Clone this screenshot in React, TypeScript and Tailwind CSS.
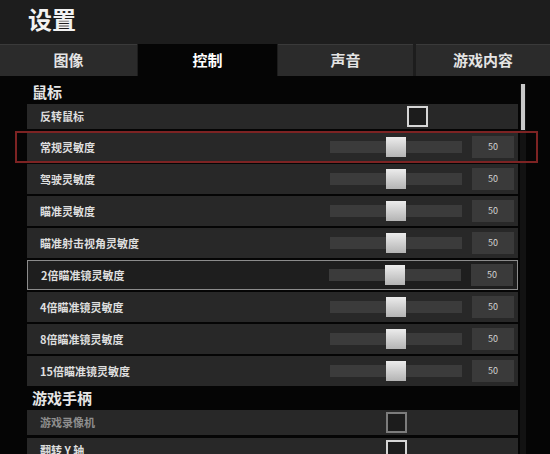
import React from "react"

const font = { fontFamily: '"Noto Sans CJK SC", "Noto Sans", sans-serif' }

const tabs = [
  { id: "image", label: "图像", w: "w-[137px] mr-[1px]" },
  { id: "control", label: "控制", w: "w-[139px] mr-[1px]" },
  { id: "sound", label: "声音", w: "w-[135px] mr-[3px]" },
  { id: "game", label: "游戏内容", w: "flex-1" },
]

const sliders = [
  { label: "常规灵敏度", selected: true },
  { label: "驾驶灵敏度" },
  { label: "瞄准灵敏度" },
  { label: "瞄准射击视角灵敏度" },
  { label: "2倍瞄准镜灵敏度", hover: true },
  { label: "4倍瞄准镜灵敏度" },
  { label: "8倍瞄准镜灵敏度" },
  { label: "15倍瞄准镜灵敏度" },
]

function SliderRow({ label, selected, hover }: { label: string; selected?: boolean; hover?: boolean }) {
  return (
    <div
      className={`relative shrink-0 h-[30px] flex items-center ${
        hover ? "border border-[#8c8c8c] bg-[#1e1e1e]" : "bg-[#282828]"
      }`}
    >
      {selected && (
        <div className="absolute -left-[12px] -right-[20px] -top-[1px] -bottom-[1px] border-2 border-[#7d2323] pointer-events-none" />
      )}
      <span className="flex-1 pl-[13px] text-[11px] font-bold text-[#dedede]">{label}</span>
      <div className="relative w-[132px] h-[12px] bg-[#3b3b3b] flex items-center justify-center">
        <div className="w-[20px] h-[20px] bg-gradient-to-b from-[#ececec] to-[#b4b4b4]" />
      </div>
      <div className="ml-[10px] mr-[4px] w-[42px] h-[22px] bg-[#3a3a3a] flex items-center justify-center text-[9px] text-[#d4d4d4]">
        50
      </div>
    </div>
  )
}

function CheckRow({
  label,
  spacer,
  dim,
}: {
  label: string
  spacer: string
  dim?: boolean
}) {
  return (
    <div className="shrink-0 h-[25px] flex items-center bg-[#282828]">
      <span className={`flex-1 pl-[13px] text-[11px] font-bold ${dim ? "text-[#8e8e8e]" : "text-[#dedede]"}`}>
        {label}
      </span>
      <div
        className={`w-[21px] h-[21px] border-2 bg-[#1c1c1c] ${dim ? "border-[#7c7c7c]" : "border-[#d6d6d6]"}`}
      />
      <div className={spacer} />
    </div>
  )
}

export default function App() {
  return (
    <div className="w-[550px] h-[454px] overflow-hidden bg-[#050505] flex flex-col" style={font}>
      {/* Header */}
      <div className="shrink-0 h-[44px] bg-[#1d1d1d] pl-[28px] pt-[2px]">
        <h1 className="text-[24px] leading-[34px] font-bold text-[#f2f2f2]">设置</h1>
      </div>

      {/* Tabs */}
      <div className="shrink-0 h-[32px] flex bg-[#1d1d1d]">
        {tabs.map((tab) => {
          const active = tab.id === "control"
          return (
            <div
              key={tab.id}
              className={`${tab.w} flex items-center justify-center text-[15px] font-bold ${
                active ? "bg-[#050505] text-white" : "bg-[#2b2b2b] text-[#e4e4e4] border-t border-[#3a3a3a]"
              }`}
            >
              {tab.label}
            </div>
          )
        })}
      </div>

      {/* Content */}
      <div className="shrink-0 flex">
        <div className="w-[27px]" />
        <div className="w-[491px] flex flex-col pt-[5px]">
          <div className="h-[22px] leading-[22px] pl-[5px] mb-[1px] text-[15px] font-bold text-[#e6e6e6]">鼠标</div>
          <CheckRow label="反转鼠标" spacer="w-[90px]" />
          <div className="flex flex-col gap-[2px] mt-[3px]">
            {sliders.map((s) => (
              <SliderRow key={s.label} label={s.label} selected={s.selected} hover={s.hover} />
            ))}
          </div>
          <div className="h-[24px] leading-[24px] pl-[5px] text-[15px] font-bold text-[#e6e6e6]">游戏手柄</div>
          <div className="flex flex-col gap-[3px]">
            <CheckRow label="游戏录像机" spacer="w-[111px]" dim />
            <CheckRow label="翻转 Y 轴" spacer="w-[111px]" />
          </div>
        </div>
        {/* Scrollbar */}
        <div className="ml-[2px] w-[6px] mt-[8px] bg-[#121212] flex justify-center">
          <div className="w-[4px] h-[46px] bg-[#c8c8c8]" />
        </div>
      </div>
    </div>
  )
}
